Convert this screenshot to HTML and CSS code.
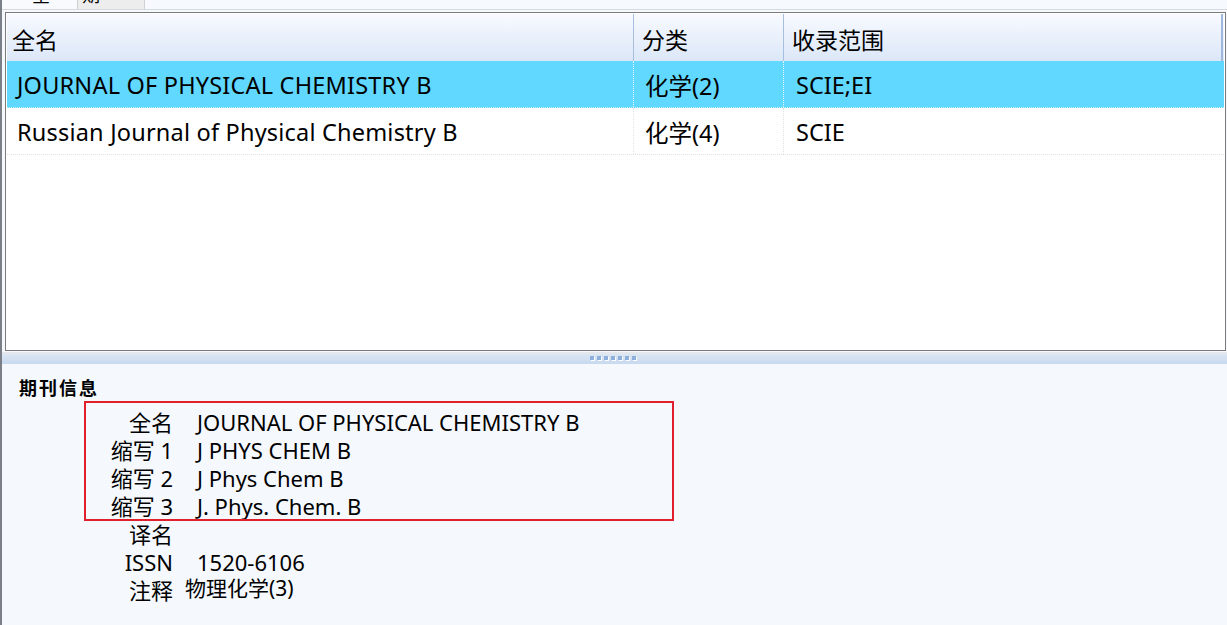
FILE: index.html
```html
<!DOCTYPE html>
<html lang="zh">
<head>
<meta charset="utf-8">
<link rel="stylesheet" href="styles.css">
</head>
<body>
<div class="page">
  <div class="tabs">
    <div class="tab tab-active"><span class="tab-label">全</span></div>
    <div class="tab tab-other"><span class="tab-label">期</span></div>
  </div>

  <div class="grid">
    <div class="row header">
      <div class="cell c1">全名</div>
      <div class="cell c2">分类</div>
      <div class="cell c3">收录范围</div>
    </div>
    <div class="row selected">
      <div class="cell c1">JOURNAL OF PHYSICAL CHEMISTRY B</div>
      <div class="cell c2">化学(2)</div>
      <div class="cell c3">SCIE;EI</div>
    </div>
    <div class="row">
      <div class="cell c1">Russian Journal of Physical Chemistry B</div>
      <div class="cell c2">化学(4)</div>
      <div class="cell c3">SCIE</div>
    </div>
  </div>

  <div class="splitter">
    <div class="grip">
      <i></i><i></i><i></i><i></i><i></i><i></i><i></i>
    </div>
  </div>

  <div class="details">
    <div class="section-title">期刊信息</div>
    <div class="info">
      <div class="label">全名</div><div class="value">JOURNAL OF PHYSICAL CHEMISTRY B</div>
      <div class="label">缩写 1</div><div class="value">J PHYS CHEM B</div>
      <div class="label">缩写 2</div><div class="value">J Phys Chem B</div>
      <div class="label">缩写 3</div><div class="value">J. Phys. Chem. B</div>
      <div class="label">译名</div><div class="value"></div>
      <div class="label">ISSN</div><div class="value">1520-6106</div>
      <div class="label">注释</div><div class="value note">物理化学(3)</div>
    </div>
    <div class="highlight"></div>
  </div>
</div>
</body>
</html>
```

FILE: styles.css
```css
* { box-sizing: border-box; }

html, body {
  margin: 0;
  padding: 0;
}

body {
  width: 1227px;
  height: 625px;
  overflow: hidden;
  background: #f5f8fd;
  font-family: "Noto Sans", "Noto Sans CJK SC", sans-serif;
  color: #000;
}

.page {
  position: relative;
  width: 1227px;
  height: 625px;
  border-left: 2px solid #7a7f88;
}

/* top tab strip (clipped) */
.tabs {
  display: flex;
  height: 10px;
  border-bottom: 1px solid #d6d9de;
  overflow: hidden;
  background: #f6f9fe;
}
.tab {
  position: relative;
  height: 10px;
  overflow: hidden;
}
.tab-active {
  width: 75px;
  background: #f8fafe;
}
.tab-other {
  width: 68px;
  background: #ededed;
  border-left: 1px solid #d0d0d0;
  border-right: 1px solid #d0d0d0;
}
.tab-label {
  display: block;
  margin-top: -15px;
  font-size: 18px;
  line-height: 20px;
  padding-left: 30px;
}
.tab-other .tab-label { padding-left: 4px; }

/* data grid */
.grid {
  margin: 2px 0 0 3px;
  width: 1221px;
  height: 339px;
  border: 1px solid #7c7c7c;
  background: #fff;
  padding: 1px;
}
.row {
  display: grid;
  grid-template-columns: 627px 150px 1fr;
  height: 47px;
  border-bottom: 1px dotted #e2e2e2;
  font-size: 23.5px;
}
.cell {
  display: flex;
  align-items: center;
  padding-left: 10px;
  border-right: 1px dotted #e2e2e2;
  white-space: nowrap;
  padding-top: 2px;
}
.row .c1 { padding-left: 10px; }
.row .c1 { letter-spacing: 0.2px; }
.row .c2 { padding-left: 11px; }
.row .c3 { padding-left: 12px; border-right: none; }

.header {
  height: 47px;
  background: linear-gradient(#f8faff, #dbe7f8);
  border-bottom: none;
  font-size: 23px;
}
.header .cell {
  border-right: 1px solid #a7bedf;
  padding-top: 2px;
  letter-spacing: 0;
}
.header .c1 { padding-left: 5px; }
.header .c2 { padding-left: 8px; }
.header .c3 { padding-left: 8px; border-right: 2px solid #9fb7dc; margin-right: 1px; }
.selected {
  background: #60d8ff;
  border-bottom: 1px dotted #c8eefc;
}
.selected .cell { border-right-color: #e8f8ff; }

/* splitter */
.splitter {
  margin-top: 1px;
  height: 12px;
  border-top: 2px solid #e4e7ec;
  background: linear-gradient(#dce6f3, #c7d9ef);
  display: flex;
  justify-content: center;
}
.grip {
  display: flex;
  gap: 3px;
  margin-left: -3px;
  margin-top: 2px;
}
.grip i {
  display: block;
  width: 4px;
  height: 4px;
  background: #8eaedb;
  box-shadow: 1px 1px 0 #fff;
}

/* details panel */
.details {
  position: relative;
  padding: 12px 0 0 17px;
}
.section-title {
  font-family: "Noto Sans CJK SC", sans-serif;
  font-weight: bold;
  font-size: 18px;
  letter-spacing: 2px;
  line-height: 22px;
}
.info {
  display: grid;
  grid-template-columns: 154px auto;
  column-gap: 24px;
  margin-top: 10px;
  font-size: 22px;
  line-height: 28px;
}
.label {
  text-align: right;
  white-space: nowrap;
}
.value { white-space: nowrap; }
.note {
  margin-left: -12px;
  font-size: 21px;
  line-height: 20px;
  align-self: start;
  margin-top: 2px;
}

.highlight {
  position: absolute;
  left: 82px;
  top: 37px;
  width: 590px;
  height: 120px;
  border: 2px solid #e0202c;
  pointer-events: none;
}
```
